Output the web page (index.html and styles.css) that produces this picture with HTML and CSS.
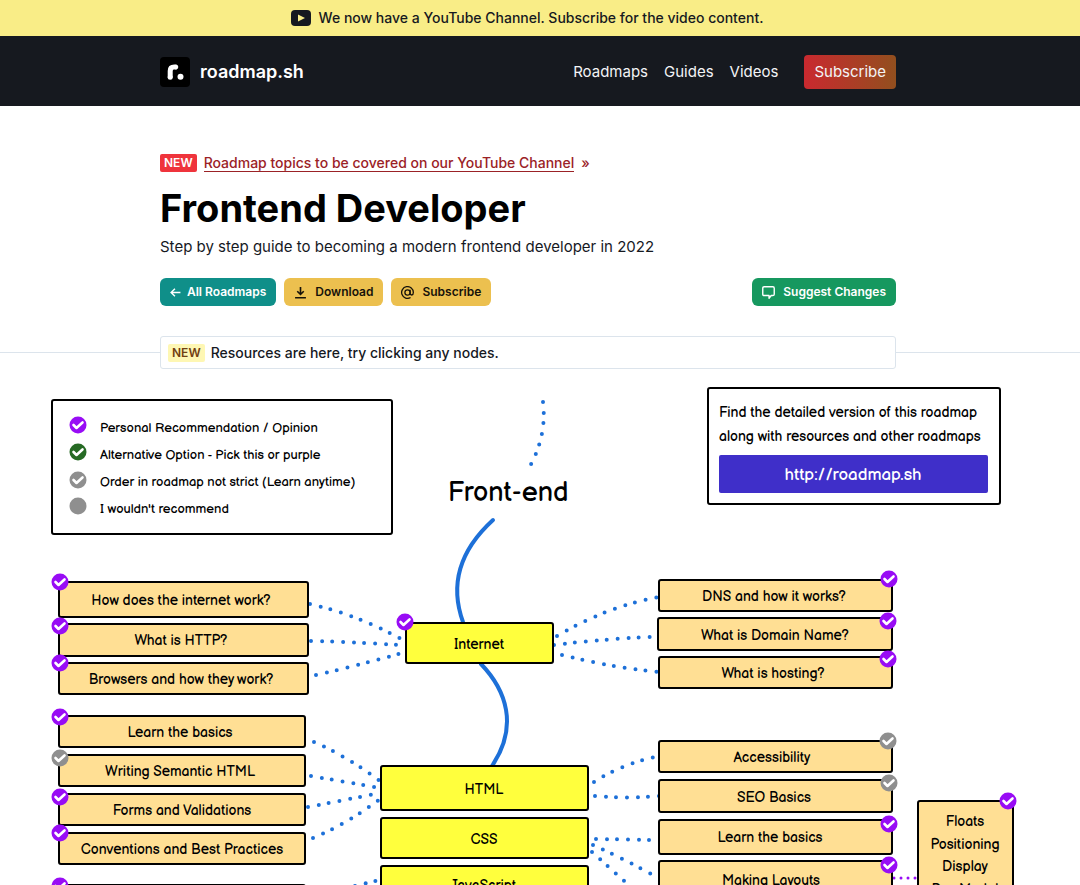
FILE: index.html
```html
<!DOCTYPE html>
<html lang="en">
<head>
<meta charset="utf-8">
<meta name="viewport" content="width=device-width, initial-scale=1">
<title>Frontend Developer - roadmap.sh</title>
<link rel="stylesheet" href="styles.css">
</head>
<body>
<a class="banner" href="#youtube">
  <svg class="banner-icon" viewBox="0 0 20 16" aria-hidden="true"><rect width="20" height="16" rx="4" fill="#16191f"/><path d="M7 4.500v7l7-3.500z" fill="#f9ed87"/></svg>
  <span>We now have a YouTube Channel. Subscribe for the video content.</span>
</a>
<header class="topbar">
  <div class="wrap topbar-row">
    <a class="brand" href="#home">
      <svg class="brand-logo" viewBox="0 0 30 30" aria-hidden="true"><rect width="30" height="30" rx="4"/><path d="M10.200 20.500V14q0-3.900 4-3.900h2.400" fill="none" stroke="#fff" stroke-width="5" stroke-linejoin="round"/><circle cx="10.200" cy="20.300" r="2.500" fill="#fff"/><circle cx="16" cy="10.100" r="2.300" fill="#fff"/><circle cx="20.500" cy="19.800" r="3" fill="#fff"/></svg>
      <span>roadmap.sh</span>
    </a>
    <nav class="menu">
      <a href="#roadmaps">Roadmaps</a>
      <a href="#guides">Guides</a>
      <a href="#videos">Videos</a>
      <a class="menu-cta" href="#subscribe">Subscribe</a>
    </nav>
  </div>
</header>
<main>
  <section class="intro">
    <div class="wrap">
    <p class="notice"><span class="tag tag-red">NEW</span><a href="#topics">Roadmap topics to be covered on our YouTube Channel</a><span class="notice-arrow">»</span></p>
    <h1>Frontend Developer</h1>
    <p class="lead">Step by step guide to becoming a modern frontend developer in 2022</p>
    <div class="actions">
      <a class="btn btn-teal" href="#all"><svg class="arrow" viewBox="0 0 10 10" aria-hidden="true"><path d="M9.500 5H1M4.500 1.500L1 5l3.500 3.500" fill="none" stroke="currentColor" stroke-width="1.300"/></svg>All Roadmaps</a>
      <button class="btn btn-yellow" type="button"><svg class="icon" viewBox="0 0 12 12" aria-hidden="true"><path d="M6 1v6.500M3 4.800l3 3 3-3M1 10.800h10" fill="none" stroke="currentColor" stroke-width="1.500"/></svg>Download</button>
      <button class="btn btn-yellow" type="button"><svg class="icon" viewBox="0 0 12 12" aria-hidden="true"><g fill="none" stroke="currentColor" stroke-width="1.200"><circle cx="6" cy="6" r="2.400"/><path d="M8.400 3.500V6.800q0 1.500 1.500 1.500 1.500-.2 1.500-2.300A5.400 5.400 0 1 0 8.800 10.600"/></g></svg>Subscribe</button>
      <a class="btn btn-green" href="#suggest"><svg class="icon" viewBox="0 0 12 12" aria-hidden="true"><path d="M2 .7h8q1.300 0 1.300 1.300v5.500q0 1.300-1.300 1.300H8.500L6.500 11.300V8.800H2Q.7 8.800.7 7.500V2Q.7.700 2 .7z" fill="none" stroke="currentColor" stroke-width="1.300" stroke-linejoin="round"/></svg>Suggest Changes</a>
    </div>
    </div>
  </section>
  <div class="divider">
    <p class="wrap hint"><span class="tag tag-pale">NEW</span>Resources are here, try clicking any nodes.</p>
  </div>
  <svg class="roadmap" viewBox="0 369 1080 516" role="group" aria-label="Frontend roadmap">
    <defs>
      <g id="tick"><circle r="8.500"/><path d="M-4.500 0l3 3 6-5.500" fill="none" stroke="#fff" stroke-width="2.600" stroke-linecap="round" stroke-linejoin="round"/></g>
    </defs>
    <g class="dots">
      <path d="M543 402Q547 435 530 466"/>
      <path d="M310 604Q358 615 401 639"/>
      <path d="M311 641Q356 642 398 645"/>
      <path d="M316 675Q360 665 402 653"/>
      <path d="M557 636Q608 606 659 597"/>
      <path d="M554 645Q602 639 651 637"/>
      <path d="M562 655Q609 667 659 672"/>
      <path d="M314 742Q348 757 380 781"/>
      <path d="M311 776L380 788"/>
      <path d="M308 807L380 793"/>
      <path d="M313 838Q347 824 380 799"/>
      <path d="M355 886L379 880"/>
      <path d="M594 782Q620 765 655 757"/>
      <path d="M595 796Q627 799 659 796"/>
      <path d="M596 839L652 840"/>
      <path d="M593 845Q622 858 653 875"/>
      <path d="M592 852L632 888"/>
    </g>
    <path class="dots-violet" d="M894 878H916"/>
    <g class="spine">
      <path d="M493 520C458 552 450 586 463 622"/>
      <path d="M481 664C506 690 519 726 492 766"/>
    </g>

    <g>
      <rect class="panel" x="52" y="400" width="340" height="134" rx="2"/>
      <use href="#tick" class="violet" x="78" y="425"/><text class="small" x="100" y="432">Personal Recommendation / Opinion</text>
      <use href="#tick" class="forest" x="78" y="452"/><text class="small" x="100" y="459">Alternative Option - Pick this or purple</text>
      <use href="#tick" class="gray" x="78" y="480"/><text class="small" x="100" y="486">Order in roadmap not strict (Learn anytime)</text>
      <circle class="gray" cx="78" cy="506" r="8.500"/><text class="small" x="100" y="513">I wouldn't recommend</text>
    </g>
    <text class="title" x="508" y="501">Front-end</text>
    <g>
      <rect class="panel" x="708" y="388" width="292" height="116" rx="2"/>
      <text x="719" y="417">Find the detailed version of this roadmap</text>
      <text x="719" y="441">along with resources and other roadmaps</text>
      <a href="#site"><rect class="url" x="719" y="455" width="269" height="38" rx="2"/><text class="url-text" x="853" y="480">http://roadmap.sh</text></a>
    </g>

    <g class="key">
      <a href="#internet"><rect x="406" y="623" width="147" height="40" rx="2"/><text x="479" y="649">Internet</text></a>
      <a href="#html"><rect x="381" y="766" width="207" height="44" rx="2"/><text x="484" y="794">HTML</text></a>
      <a href="#css"><rect x="381" y="818" width="207" height="40" rx="2"/><text x="484" y="844">CSS</text></a>
      <a href="#javascript"><rect x="381" y="866" width="207" height="40" rx="2"/><text x="483" y="890">JavaScript</text></a>
    </g>
    <g class="node">
      <a href="#n1"><rect x="59" y="582" width="249" height="35" rx="2"/><text x="181" y="605">How does the internet work?</text></a>
      <a href="#n2"><rect x="59" y="624" width="249" height="32" rx="2"/><text x="181" y="645">What is HTTP?</text></a>
      <a href="#n3"><rect x="59" y="663" width="249" height="31" rx="2"/><text x="181" y="684">Browsers and how they work?</text></a>
      <a href="#n4"><rect x="59" y="716" width="246" height="31" rx="2"/><text x="180" y="737">Learn the basics</text></a>
      <a href="#n5"><rect x="59" y="755" width="246" height="31" rx="2"/><text x="180" y="776">Writing Semantic HTML</text></a>
      <a href="#n6"><rect x="59" y="794" width="246" height="31" rx="2"/><text x="182" y="815">Forms and Validations</text></a>
      <a href="#n7"><rect x="59" y="833" width="246" height="31" rx="2"/><text x="182" y="854">Conventions and Best Practices</text></a>
      <rect x="59" y="885" width="246" height="31" rx="2"/>
      <a href="#n8"><rect x="659" y="580" width="233" height="31" rx="2"/><text x="774" y="601">DNS and how it works?</text></a>
      <a href="#n9"><rect x="658" y="618" width="234" height="32" rx="2"/><text x="775" y="640">What is Domain Name?</text></a>
      <a href="#n10"><rect x="659" y="657" width="233" height="31" rx="2"/><text x="773" y="678">What is hosting?</text></a>
      <a href="#n11"><rect x="659" y="741" width="233" height="31" rx="2"/><text x="772" y="762">Accessibility</text></a>
      <a href="#n12"><rect x="659" y="780" width="233" height="32" rx="2"/><text x="774" y="802">SEO Basics</text></a>
      <a href="#n13"><rect x="659" y="820" width="233" height="34" rx="2"/><text x="770" y="842">Learn the basics</text></a>
      <a href="#n14"><rect x="659" y="861" width="233" height="40" rx="2"/><text x="771" y="885">Making Layouts</text></a>
      <a href="#n15"><rect x="918" y="801" width="95" height="120" rx="2"/><text x="965" y="826">Floats</text><text x="965" y="849">Positioning</text><text x="965" y="871">Display</text><text x="965" y="894">Box Model</text></a>
    </g>
    <g class="violet">
      <use href="#tick" x="60" y="582"/><use href="#tick" x="60" y="626"/><use href="#tick" x="60" y="663"/><use href="#tick" x="60" y="717"/><use href="#tick" x="60" y="797"/><use href="#tick" x="60" y="833"/><use href="#tick" x="60" y="886"/>
      <use href="#tick" x="405" y="622"/>
      <use href="#tick" x="889" y="579"/><use href="#tick" x="888" y="621"/><use href="#tick" x="888" y="659"/><use href="#tick" x="889" y="824"/><use href="#tick" x="889" y="865"/><use href="#tick" x="1008" y="801"/>
    </g>
    <g class="gray"><use href="#tick" x="60" y="758"/><use href="#tick" x="888" y="741"/><use href="#tick" x="889" y="783"/></g>
  </svg>
</main>
</body>
</html>
```
FILE: styles.css
```css
* { box-sizing: border-box; }
body { margin: 0; background: #fff; color: #16191f; font: 14px/20px Inter, "Liberation Sans", sans-serif; }
a { color: inherit; text-decoration: none; }
p, h1 { margin: 0; }
.wrap { width: 100%; max-width: 736px; margin: 0 auto; }
.banner { display: flex; align-items: center; justify-content: center; gap: 8px; padding: 8px 26px 8px 0; background: #f9ed87; font-weight: 500; }
.banner-icon { width: 20px; height: 16px; }
.topbar { padding: 19px 24px 17px 0; background: #16191f; color: #fff; }
.topbar-row { display: flex; align-items: center; justify-content: space-between; }
.brand { display: flex; align-items: center; gap: 10px; font-size: 18px; font-weight: 600; }
.brand-logo { width: 30px; height: 30px; }
.menu { display: flex; align-items: center; gap: 16px; font-size: 15px; color: #f3f4f6; }
.menu-cta { margin-left: 10px; padding: 7px 10px; border-radius: 4px; background: linear-gradient(90deg, #c9292f, #924f1e); }
main { padding-top: 47px; }
.intro { padding-right: 24px; }
.notice { display: flex; align-items: center; gap: 7px; color: #9b2226; }
.notice a { border-bottom: 1px solid; line-height: 17px; font-weight: 500; }
.notice-arrow { font-weight: 500; }
.tag { padding: 0 4px; border-radius: 2px; font-size: 12px; line-height: 18px; font-weight: 600; }
.tag-red { background: #ef343c; color: #fff; }
.tag-pale { background: #fef7b4; color: #713f12; }
h1 { margin-top: 12px; color: #000; font-size: 38px; line-height: 46px; font-weight: 700; }
.lead { margin-top: 4px; font-size: 15px; line-height: 24px; }
.actions { display: flex; gap: 8px; margin-top: 19px; }
.btn { display: flex; align-items: center; gap: 8px; height: 28px; padding: 0 10px; border: 0; border-radius: 6px; font: 600 12px/20px Inter, "Liberation Sans", sans-serif; cursor: pointer; }
.btn-teal { gap: 6px; background: #0f8f89; color: #fff; }
.btn-yellow { background: #ecc04f; color: #16120a; }
.btn-green { margin-left: auto; background: #16985f; color: #fff; }
.arrow { width: 11px; height: 11px; }
.icon { width: 13px; height: 13px; }
.divider { margin-top: 30px; padding-right: 24px; background: linear-gradient(#dce4ec, #dce4ec) 0 16px / 100% 1px no-repeat; }
.hint { display: flex; align-items: center; gap: 6px; padding: 6px 7px 5px; border: 1px solid #dce4ec; border-radius: 3px; background: #fff; font-weight: 500; }

.roadmap { display: block; width: 100%; height: auto; font-family: "Balsamiq Sans", Lato, sans-serif; }
.roadmap text { fill: #000; font-size: 14px; font-weight: 500; }
.roadmap .small { font-size: 13px; }
.roadmap .title { font-size: 27px; text-anchor: middle; }
.roadmap .url-text { fill: #fff; font-size: 17px; text-anchor: middle; }
.url { fill: #3f2fc9; }
.panel { fill: #fff; stroke: #000; stroke-width: 2px; }
.node text, .key text { text-anchor: middle; }
.node rect { fill: #ffdf94; stroke: #000; stroke-width: 2px; }
.key rect { fill: #ffff3d; stroke: #000; stroke-width: 2px; }
.dots { fill: none; stroke: #1d70d8; stroke-width: 4px; stroke-linecap: round; stroke-dasharray: 0 11 0 10 0 11; }
.dots-violet { fill: none; stroke: #980cf5; stroke-width: 3px; stroke-linecap: round; stroke-dasharray: 0 7; }
.spine { fill: none; stroke: #1d70d8; stroke-width: 4px; stroke-linecap: round; }
.violet { fill: #980cf5; }
.forest { fill: #266a24; }
.gray { fill: #8f8f8f; }
```
